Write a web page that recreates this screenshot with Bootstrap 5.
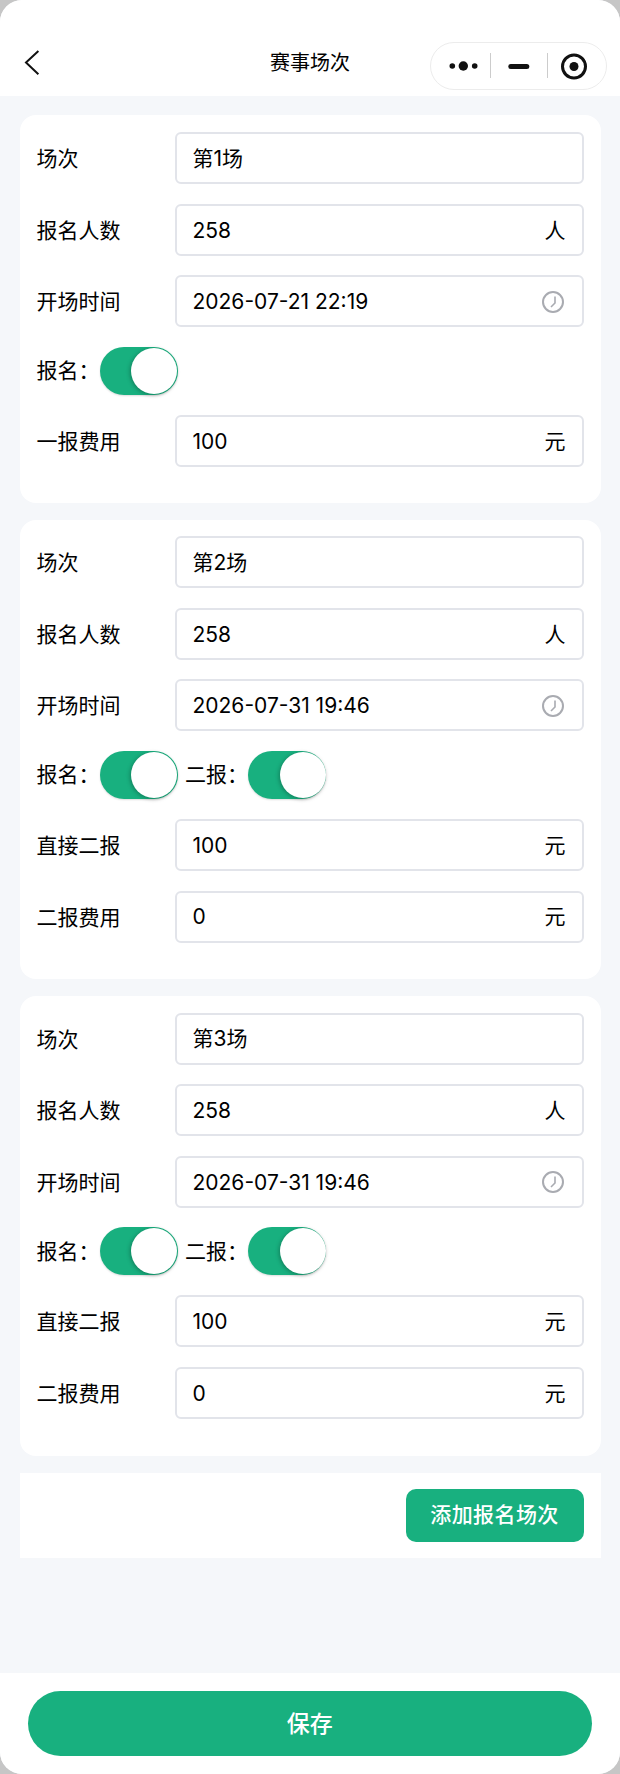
<!DOCTYPE html>
<html lang="zh">
<head>
<meta charset="utf-8">
<title>赛事场次</title>
<link href="https://cdn.jsdelivr.net/npm/bootstrap@5.3.0/dist/css/bootstrap.min.css" rel="stylesheet">
<style>
html,body{height:100%;margin:0;background:#c6c6c6}
body{font-family:Inter,"Noto Sans CJK SC",sans-serif;color:#000}
.phone{width:620px;height:1774px;background:#f5f7fa;border-radius:22px;overflow:hidden}
.topbar{height:96px;background:#fff;position:relative}
.back-ico{position:absolute;left:24px;top:50px}
.ttl{position:absolute;left:0;right:0;top:49px;text-align:center;font-size:20px;line-height:28px;font-weight:400}
.capsule{position:absolute;left:430px;top:42px;width:177px;height:47.5px;border:1px solid #ececec;border-radius:24px;background:#fff}
.cap-ico{position:absolute;left:0;top:0}
.content{padding:19px 19.5px 0}
.sheet{background:#fff;border-radius:16px;padding:16.5px 17px 36.5px;margin-bottom:17px}
.sheet:first-child{padding-top:17.2px;padding-bottom:35.8px}
.frow{height:52px;margin-bottom:19.6px}
.frow:last-child{margin-bottom:0}
.lab{width:138px;font-size:21px;line-height:28px;padding-top:2px}
.fbox{height:52px;border:2px solid #e2e4ea;border-radius:6px;padding:1px 16px 0;font-size:21px}
.clock{margin-right:1px}
.swrow{height:48px;margin-bottom:20px;font-size:21px}
.sw{width:78px;height:48px;border-radius:24px;background:#18b07f;position:relative;margin-right:7.5px;box-shadow:0 1px 2px rgba(0,0,0,.14)}
.knob{position:absolute;right:.5px;top:1px;width:46px;height:46px;border-radius:50%;background:#fff;box-shadow:-1px 1px 4px rgba(0,0,0,.28)}
.addbar{background:#fff;height:85px;padding:16px 17px 0}
.addbtn{width:178px;height:53px;background:#18b07f;color:#fff;border:0;border-radius:10px;font-size:21px;font-weight:500;letter-spacing:.4px;padding:0}
.foot{height:101px;background:#fff;padding:18px 28.5px 0 28px}
.savebtn{height:65px;background:#18b07f;color:#fff;border:0;border-radius:33px;font-size:23px;font-weight:500;padding:2px 0 0}
.mainpart{height:1577px}
</style>
</head>
<body>
<div class="phone">
  <div class="topbar">
    <svg class="back-ico" width="18" height="26" viewBox="0 0 18 26"><path d="M14.4 1 2 12.6 14.4 24.2" fill="none" stroke="#111" stroke-width="2"/></svg>
    <div class="ttl">赛事场次</div>
    <div class="capsule">
      <svg class="cap-ico" width="175" height="46" viewBox="0 0 175 46">
        <circle cx="21.3" cy="23" r="2.8" fill="#111"/><circle cx="32.3" cy="23" r="4.7" fill="#111"/><circle cx="43.7" cy="23" r="2.8" fill="#111"/>
        <rect x="59" y="10" width="1" height="25" fill="#ccc"/>
        <rect x="77.3" y="21" width="21" height="5" rx="2.5" fill="#111"/>
        <rect x="116" y="10" width="1" height="25" fill="#ccc"/>
        <circle cx="143" cy="23.5" r="11.5" fill="none" stroke="#111" stroke-width="3"/><circle cx="143" cy="23.5" r="4.5" fill="#111"/>
      </svg>
    </div>
  </div>
  <div class="content mainpart">
    <div class="sheet">
      <div class="frow d-flex align-items-center"><div class="lab flex-shrink-0">场次</div><div class="fbox flex-grow-1 d-flex align-items-center justify-content-between"><span>第1场</span></div></div>
      <div class="frow d-flex align-items-center"><div class="lab flex-shrink-0">报名人数</div><div class="fbox flex-grow-1 d-flex align-items-center justify-content-between"><span>258</span><span>人</span></div></div>
      <div class="frow d-flex align-items-center"><div class="lab flex-shrink-0">开场时间</div><div class="fbox flex-grow-1 d-flex align-items-center justify-content-between"><span>2026-07-21 22:19</span><svg class="clock" width="24" height="24" viewBox="0 0 24 24"><circle cx="12" cy="12" r="10" fill="none" stroke="#a9abb1" stroke-width="2"/><path d="M14 6.5V13L10 17" fill="none" stroke="#a9abb1" stroke-width="1.6"/></svg></div></div>
      <div class="swrow d-flex align-items-center"><span>报名：</span><div class="sw flex-shrink-0"><div class="knob"></div></div></div>
      <div class="frow d-flex align-items-center"><div class="lab flex-shrink-0">一报费用</div><div class="fbox flex-grow-1 d-flex align-items-center justify-content-between"><span>100</span><span>元</span></div></div>
    </div>
    <div class="sheet">
      <div class="frow d-flex align-items-center"><div class="lab flex-shrink-0">场次</div><div class="fbox flex-grow-1 d-flex align-items-center justify-content-between"><span>第2场</span></div></div>
      <div class="frow d-flex align-items-center"><div class="lab flex-shrink-0">报名人数</div><div class="fbox flex-grow-1 d-flex align-items-center justify-content-between"><span>258</span><span>人</span></div></div>
      <div class="frow d-flex align-items-center"><div class="lab flex-shrink-0">开场时间</div><div class="fbox flex-grow-1 d-flex align-items-center justify-content-between"><span>2026-07-31 19:46</span><svg class="clock" width="24" height="24" viewBox="0 0 24 24"><circle cx="12" cy="12" r="10" fill="none" stroke="#a9abb1" stroke-width="2"/><path d="M14 6.5V13L10 17" fill="none" stroke="#a9abb1" stroke-width="1.6"/></svg></div></div>
      <div class="swrow d-flex align-items-center"><span>报名：</span><div class="sw flex-shrink-0"><div class="knob"></div></div><span>二报：</span><div class="sw flex-shrink-0"><div class="knob"></div></div></div>
      <div class="frow d-flex align-items-center"><div class="lab flex-shrink-0">直接二报</div><div class="fbox flex-grow-1 d-flex align-items-center justify-content-between"><span>100</span><span>元</span></div></div>
      <div class="frow d-flex align-items-center"><div class="lab flex-shrink-0">二报费用</div><div class="fbox flex-grow-1 d-flex align-items-center justify-content-between"><span>0</span><span>元</span></div></div>
    </div>
    <div class="sheet">
      <div class="frow d-flex align-items-center"><div class="lab flex-shrink-0">场次</div><div class="fbox flex-grow-1 d-flex align-items-center justify-content-between"><span>第3场</span></div></div>
      <div class="frow d-flex align-items-center"><div class="lab flex-shrink-0">报名人数</div><div class="fbox flex-grow-1 d-flex align-items-center justify-content-between"><span>258</span><span>人</span></div></div>
      <div class="frow d-flex align-items-center"><div class="lab flex-shrink-0">开场时间</div><div class="fbox flex-grow-1 d-flex align-items-center justify-content-between"><span>2026-07-31 19:46</span><svg class="clock" width="24" height="24" viewBox="0 0 24 24"><circle cx="12" cy="12" r="10" fill="none" stroke="#a9abb1" stroke-width="2"/><path d="M14 6.5V13L10 17" fill="none" stroke="#a9abb1" stroke-width="1.6"/></svg></div></div>
      <div class="swrow d-flex align-items-center"><span>报名：</span><div class="sw flex-shrink-0"><div class="knob"></div></div><span>二报：</span><div class="sw flex-shrink-0"><div class="knob"></div></div></div>
      <div class="frow d-flex align-items-center"><div class="lab flex-shrink-0">直接二报</div><div class="fbox flex-grow-1 d-flex align-items-center justify-content-between"><span>100</span><span>元</span></div></div>
      <div class="frow d-flex align-items-center"><div class="lab flex-shrink-0">二报费用</div><div class="fbox flex-grow-1 d-flex align-items-center justify-content-between"><span>0</span><span>元</span></div></div>
    </div>
    <div class="addbar d-flex justify-content-end"><button type="button" class="btn addbtn">添加报名场次</button></div>
  </div>
  <div class="foot"><button type="button" class="btn savebtn w-100">保存</button></div>
</div>
<script src="https://cdn.jsdelivr.net/npm/bootstrap@5.3.0/dist/js/bootstrap.bundle.min.js"></script>
</body>
</html>
